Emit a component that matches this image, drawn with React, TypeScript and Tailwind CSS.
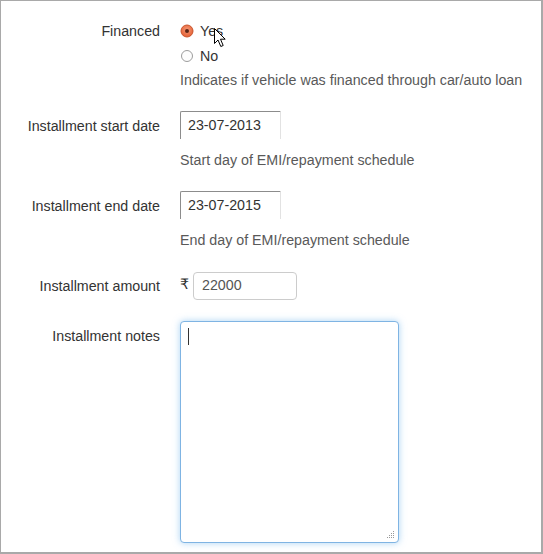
import React from "react";

function Radio({ checked }: { checked: boolean }) {
  return (
    <svg width="14" height="14" viewBox="0 0 14 14" className="shrink-0">
      {checked ? (
        <>
          <defs>
            <radialGradient id="rg" cx="50%" cy="40%" r="60%">
              <stop offset="0%" stopColor="#f59a78" />
              <stop offset="100%" stopColor="#e45f33" />
            </radialGradient>
          </defs>
          <circle cx="7" cy="7" r="6" fill="url(#rg)" stroke="#c9542c" strokeWidth="1" />
          <circle cx="7" cy="7" r="2" fill="#5b2516" />
        </>
      ) : (
        <circle cx="7" cy="7" r="5.5" fill="#fdfdfd" stroke="#9c9c9c" strokeWidth="1" />
      )}
    </svg>
  );
}

function DateInput({ value }: { value: string }) {
  return (
    <div className="w-[101px] h-[28px] flex items-center pl-[7px] pt-[1px] border-t border-l border-r border-t-[#8c8c8c] border-l-[#8c8c8c] border-r-[#e2e2e2] rounded-tl-[2px] text-[#333] bg-white">
      {value}
    </div>
  );
}

export default function App() {
  return (
    <div
      className="w-[543px] h-[554px] bg-white border-l border-t border-r-2 border-b-2 border-[#a9a9a9] relative text-[14.25px]"
      style={{ fontFamily: '"Liberation Sans", "DejaVu Sans", Arial, sans-serif' }}
    >
      <div className="flex flex-col pt-[20px]">
        {/* Financed */}
        <div className="flex">
          <div className="w-[159px] text-right text-[#333] leading-[20px]">Financed</div>
          <div className="ml-[20px] flex flex-col">
            <div className="flex items-center h-[20px] leading-[20px] text-[#333]">
              <Radio checked />
              <span className="ml-[6px]">Yes</span>
            </div>
            <div className="flex items-center h-[20px] leading-[20px] mt-[5px] text-[#333]">
              <Radio checked={false} />
              <span className="ml-[6px]">No</span>
            </div>
            <div className="leading-[20px] mt-[4px] text-[#595959]">
              Indicates if vehicle was financed through car/auto loan
            </div>
          </div>
        </div>

        {/* Start date */}
        <div className="flex mt-[21px]">
          <div className="w-[159px] h-[28px] pt-[3px] flex items-center justify-end text-[#333]">Installment start date</div>
          <div className="ml-[20px] flex flex-col">
            <DateInput value="23-07-2013" />
            <div className="leading-[20px] mt-[11px] text-[#595959]">Start day of EMI/repayment schedule</div>
          </div>
        </div>

        {/* End date */}
        <div className="flex mt-[21px]">
          <div className="w-[159px] h-[28px] pt-[3px] flex items-center justify-end text-[#333]">Installment end date</div>
          <div className="ml-[20px] flex flex-col">
            <DateInput value="23-07-2015" />
            <div className="leading-[20px] mt-[11px] text-[#595959]">End day of EMI/repayment schedule</div>
          </div>
        </div>

        {/* Amount */}
        <div className="flex mt-[22px]">
          <div className="w-[159px] h-[28px] pt-[2px] flex items-center justify-end text-[#333]">Installment amount</div>
          <div className="ml-[20px] flex items-center">
            <span className="text-[#333] -mt-[2px] w-[13px]">₹</span>
            <div className="w-[104px] h-[28px] flex items-center pl-[8px] border border-[#cccccc] rounded-[4px] text-[#555]">
              22000
            </div>
          </div>
        </div>

        {/* Notes */}
        <div className="flex mt-[21px]">
          <div className="w-[159px] text-right text-[#333] leading-[20px] pt-[5px]">Installment notes</div>
          <div className="ml-[20px]">
            <div className="relative w-[219px] h-[222px] border border-[#7fb4e3] rounded-[4px] bg-white shadow-[0_0_7px_rgba(102,175,233,0.55)]">
              <div className="absolute left-[7px] top-[6px] w-[1px] h-[17px] bg-[#333]" />
              <svg className="absolute right-[3px] bottom-[3px]" width="9" height="9" viewBox="0 0 9 9">
                <rect x="7" y="1" width="1" height="1" fill="#999" />
                <rect x="5" y="3" width="1" height="1" fill="#999" />
                <rect x="7" y="3" width="1" height="1" fill="#999" />
                <rect x="3" y="5" width="1" height="1" fill="#999" />
                <rect x="5" y="5" width="1" height="1" fill="#999" />
                <rect x="7" y="5" width="1" height="1" fill="#999" />
                <rect x="1" y="7" width="1" height="1" fill="#999" />
                <rect x="3" y="7" width="1" height="1" fill="#999" />
                <rect x="5" y="7" width="1" height="1" fill="#999" />
                <rect x="7" y="7" width="1" height="1" fill="#999" />
              </svg>
            </div>
          </div>
        </div>
      </div>

      {/* Mouse cursor */}
      <svg className="absolute left-[212px] top-[26px]" width="14" height="22" viewBox="0 0 14 22">
        <path
          d="M1.5 1.5 L1.5 16.5 L5 13 L7.8 19.5 L10.2 18.5 L7.5 12.2 L12.2 12.2 Z"
          fill="#fff"
          stroke="#000"
          strokeWidth="1"
          strokeLinejoin="round"
        />
      </svg>
    </div>
  );
}
